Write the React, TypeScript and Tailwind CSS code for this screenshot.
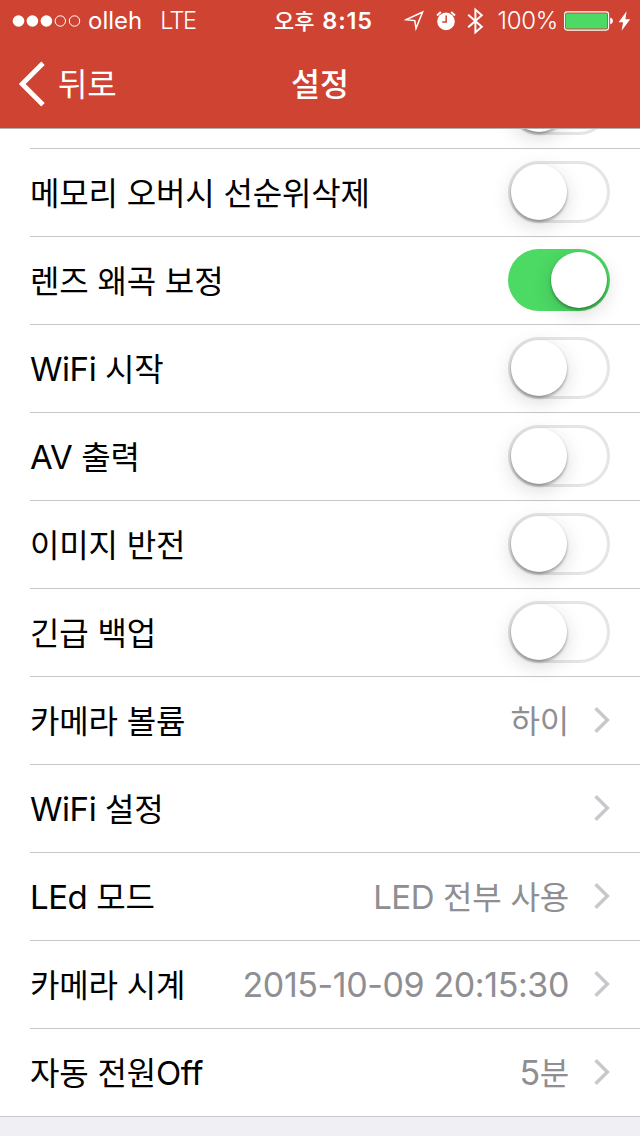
import React from "react";

interface SettingItem {
  label: string;
  type: "switch" | "link";
  on?: boolean;
  value?: string;
}

const settings: SettingItem[] = [
  { label: "메모리 오버시 선순위삭제", type: "switch" },
  { label: "렌즈 왜곡 보정", type: "switch", on: true },
  { label: "WiFi 시작", type: "switch" },
  { label: "AV 출력", type: "switch" },
  { label: "이미지 반전", type: "switch" },
  { label: "긴급 백업", type: "switch" },
  { label: "카메라 볼륨", type: "link", value: "하이" },
  { label: "WiFi 설정", type: "link" },
  { label: "LEd 모드", type: "link", value: "LED 전부 사용" },
  { label: "카메라 시계", type: "link", value: "2015-10-09 20:15:30" },
  { label: "자동 전원Off", type: "link", value: "5분" },
];

// Hangul, Latin and digits need slightly different sizes to sit well together
function MixedText({ text }: { text: string }) {
  const parts = text.split(/([A-Za-z]+|[0-9][0-9:-]*(?: [0-9:]+)?)/).filter(Boolean);
  const partClass = (part: string) => {
    if (/[0-9]/.test(part)) return "text-[34px] tracking-[-0.4px]";
    if (/[A-Za-z]/.test(part)) return "text-[33px] tracking-[-0.45px]";
    return "tracking-[-0.15px]";
  };

  return (
    <span className="pt-[3px] text-[32px] leading-[44px] whitespace-pre">
      {parts.map((part, i) => (
        <span key={i} className={partClass(part)}>
          {part}
        </span>
      ))}
    </span>
  );
}

function Switch({ on }: { on?: boolean }) {
  return (
    <div
      className={
        on
          ? "flex h-[62px] w-[102px] shrink-0 justify-end rounded-full bg-[#4cd964] p-[3px]"
          : "flex h-[62px] w-[102px] shrink-0 rounded-full border-[3px] border-[#e5e5e5] bg-white"
      }
    >
      <div className="h-14 w-14 rounded-full bg-white shadow-[0_2px_3px_rgba(0,0,0,0.34),0_6px_20px_rgba(0,0,0,0.15)]" />
    </div>
  );
}

function Chevron() {
  return (
    <svg width="16" height="28" viewBox="0 0 16 28" fill="none" className="ml-[25px] shrink-0">
      <path d="M1.6 2.2 13.4 14 1.6 25.8" stroke="#c7c7cc" strokeWidth="3.4" />
    </svg>
  );
}

function SettingRow({ item, last }: { item: SettingItem; last: boolean }) {
  return (
    <div className={last ? "border-b border-[#c8c7cc]" : "ml-[30px] border-b border-[#c8c7cc]"}>
      <div
        className={
          last
            ? "flex h-[87px] items-center justify-between pr-[30px] pb-px pl-[30px]"
            : "flex h-[87px] items-center justify-between pr-[30px] pb-px"
        }
      >
        <MixedText text={item.label} />
        {item.type === "switch" ? (
          <Switch on={item.on} />
        ) : (
          <div className="flex items-center text-[#8e8e93]">
            {item.value && <MixedText text={item.value} />}
            <Chevron />
          </div>
        )}
      </div>
    </div>
  );
}

function StatusBar() {
  return (
    <div className="flex h-10 items-center pt-px text-[24px] leading-10">
      <div className="flex w-[274px] items-center pl-3">
        <svg width="70" height="16" viewBox="0 0 70 16" fill="none">
          <circle cx="6.5" cy="8" r="5.8" fill="white" />
          <circle cx="20.4" cy="8" r="5.8" fill="white" />
          <circle cx="34.4" cy="8" r="5.8" fill="white" />
          <circle cx="48.3" cy="8" r="5.2" stroke="white" />
          <circle cx="62.5" cy="8" r="5.2" stroke="white" />
        </svg>
        <span className="ml-1.5 pt-px">olleh</span>
        <span className="ml-[18px] pt-px text-[23.5px] font-light tracking-[-1.6px]">LTE</span>
      </div>
      <div className="pt-px font-semibold whitespace-pre">
        <span className="text-[22px] font-medium">오후 </span>
        <span className="ml-0.5 text-[23.5px] tracking-[0.8px]">8:15</span>
      </div>
      <div className="ml-auto flex items-center pr-[9px]">
        <svg width="21" height="22" viewBox="0 0 21 22" fill="none">
          <path d="M2 9.8 18.6 2 12 18.4 10.8 10.6Z" stroke="white" strokeWidth="1.5" />
        </svg>
        <svg width="20" height="22" viewBox="0 0 20 22" fill="none" className="ml-[11px]">
          <circle cx="10" cy="11.4" r="8.8" fill="white" />
          <path d="M1 5.4 4.8 2M19 5.4 15.2 2" stroke="white" strokeWidth="2" />
          <path d="M10.2 5.6V12H6.2" stroke="#cf4333" strokeWidth="1.5" />
        </svg>
        <svg width="17" height="28" viewBox="0 0 17 28" fill="none" className="ml-[11px]">
          <path d="M1.2 7.8 14.8 19.8 8.4 25.4V2.6L14.8 8.2 1.2 20.2" stroke="white" strokeWidth="2" />
        </svg>
        <span className="ml-3.5 pt-px font-light tracking-[-0.3px]">100%</span>
        <svg width="50" height="20" viewBox="0 0 50 20" fill="none" className="ml-1.5">
          <rect x="0.6" y="0.9" width="44" height="18.2" rx="2.5" stroke="white" strokeWidth="1.1" />
          <rect x="2" y="2.4" width="41.2" height="15.2" rx="1" fill="#4cd964" />
          <path d="M46.2 6.8C49.8 7.2 49.8 12.8 46.2 13.2Z" fill="white" />
        </svg>
        <svg width="13" height="20" viewBox="0 0 13 20" className="ml-1">
          <path d="M8.6 0.3 0.6 11.2H5.1L3.6 19.8 12.2 8.2H7.4Z" fill="white" />
        </svg>
      </div>
    </div>
  );
}

export default function App() {
  return (
    <div className="flex h-[1136px] w-[640px] flex-col overflow-hidden bg-[#efeff4] font-['Inter','Noto_Sans_CJK_KR',sans-serif] text-black">
      <header className="z-10 h-[129px] shrink-0 border-b border-[#b2b2b2] bg-[#cf4333] text-white">
        <StatusBar />
        <div className="grid h-[88px] grid-cols-3 items-center">
          <button className="flex items-center pl-[19px]">
            <svg width="27" height="46" viewBox="0 0 27 46" fill="none">
              <path d="M24 2.2 3.2 23 24 43.8" stroke="white" strokeWidth="4.8" />
            </svg>
            <span className="ml-3 pt-0.5 text-[32px] leading-[44px] tracking-[-0.3px]">뒤로</span>
          </button>
          <h1 className="pt-0.5 text-center text-[31.5px] leading-[44px] font-medium">설정</h1>
        </div>
      </header>

      <main className="bg-white">
        {/* row scrolled under the header */}
        <div className="flex h-5 flex-col justify-end overflow-hidden">
          <div className="ml-[30px] flex h-[88px] shrink-0 items-center justify-end border-b border-[#c8c7cc] pr-[30px] pb-px">
            <Switch />
          </div>
        </div>
        {settings.map((item, i) => (
          <SettingRow key={item.label} item={item} last={i === settings.length - 1} />
        ))}
      </main>
    </div>
  );
}
